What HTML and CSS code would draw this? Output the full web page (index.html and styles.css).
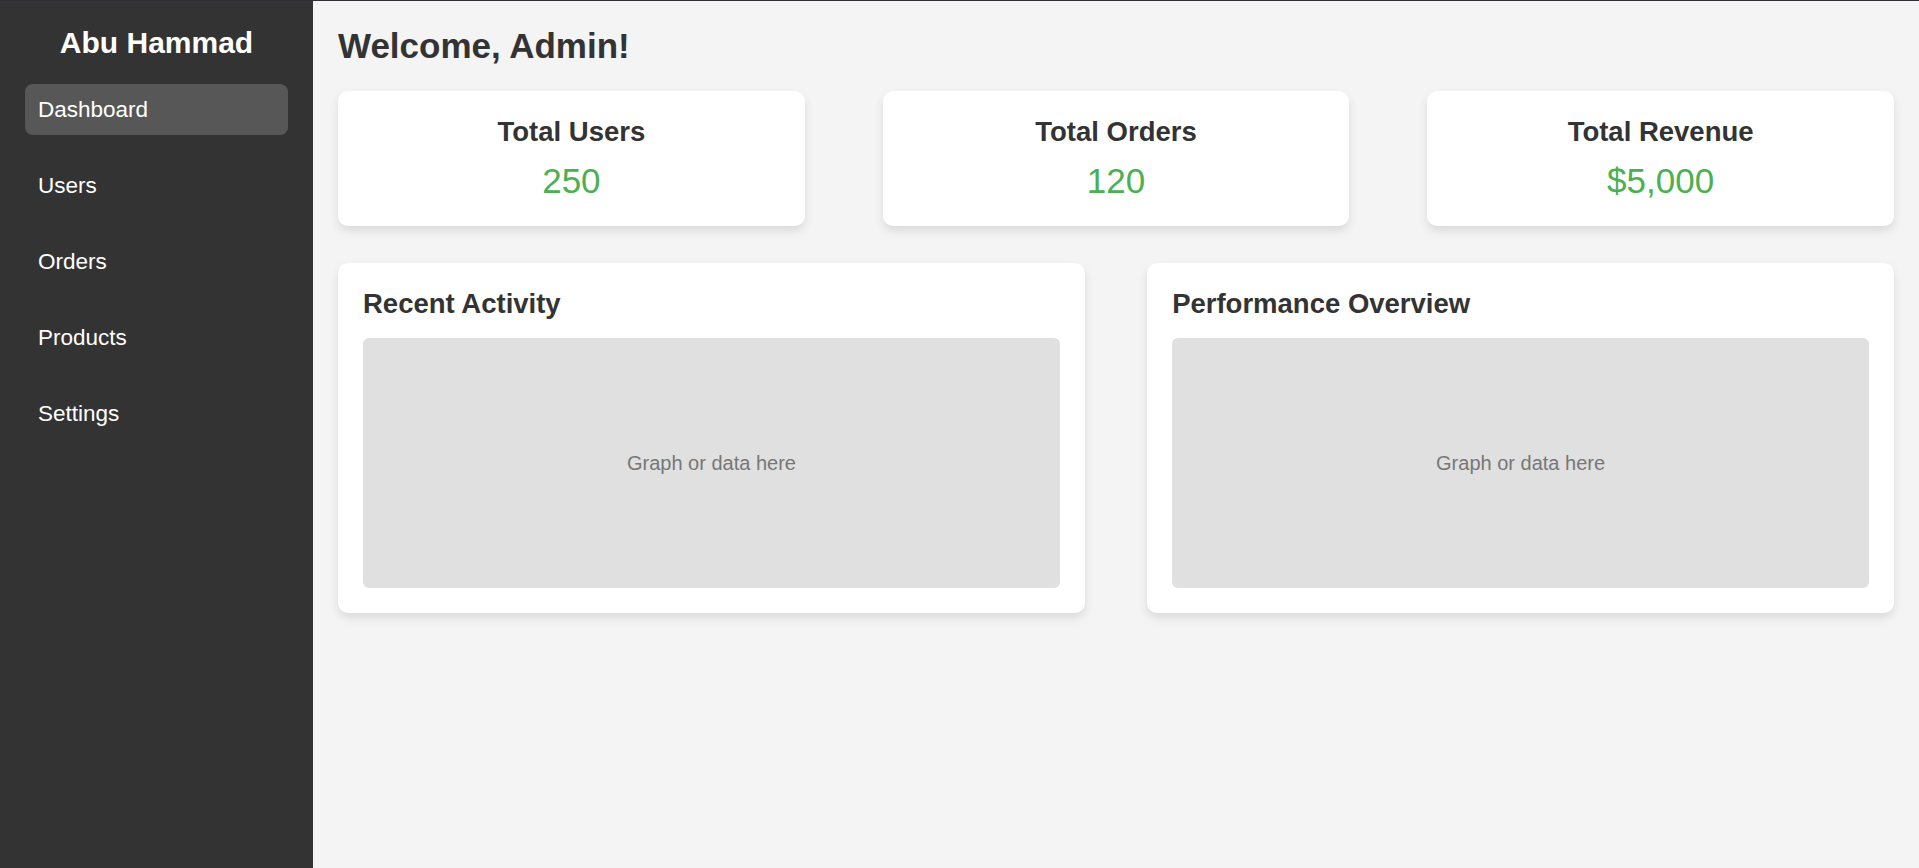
FILE: index.html
```html
<!DOCTYPE html>
<html lang="en">
<head>
<meta charset="utf-8">
<title>Admin Dashboard</title>
<link rel="stylesheet" href="styles.css">
</head>
<body>
<div class="layout">
  <aside class="sidebar">
    <h2 class="brand">Abu Hammad</h2>
    <ul class="nav">
      <li class="nav-item active">Dashboard</li>
      <li class="nav-item">Users</li>
      <li class="nav-item">Orders</li>
      <li class="nav-item">Products</li>
      <li class="nav-item">Settings</li>
    </ul>
  </aside>
  <main class="main">
    <h1 class="welcome">Welcome, Admin!</h1>
    <section class="stats">
      <div class="stat-card">
        <h3 class="stat-title">Total Users</h3>
        <p class="stat-value">250</p>
      </div>
      <div class="stat-card">
        <h3 class="stat-title">Total Orders</h3>
        <p class="stat-value">120</p>
      </div>
      <div class="stat-card">
        <h3 class="stat-title">Total Revenue</h3>
        <p class="stat-value">$5,000</p>
      </div>
    </section>
    <section class="panels">
      <div class="panel">
        <h3 class="panel-title">Recent Activity</h3>
        <div class="placeholder">Graph or data here</div>
      </div>
      <div class="panel">
        <h3 class="panel-title">Performance Overview</h3>
        <div class="placeholder">Graph or data here</div>
      </div>
    </section>
  </main>
</div>
</body>
</html>
```

FILE: styles.css
```css
* {
  box-sizing: border-box;
}

html, body {
  margin: 0;
  padding: 0;
  height: 100%;
}

body {
  font-family: "Liberation Sans", Arial, sans-serif;
  color: #333;
  background: #f4f4f4;
}

.layout {
  display: flex;
  min-height: 100%;
  border-top: 1px solid #2e3036;
}

.sidebar {
  width: 313px;
  flex-shrink: 0;
  background: #333;
  color: #fff;
  padding: 25px 25px;
}

.brand {
  margin: 0 0 24px;
  font-size: 30px;
  font-weight: bold;
  text-align: center;
}

.nav {
  list-style: none;
  margin: 0;
  padding: 0;
  display: flex;
  flex-direction: column;
  gap: 25px;
}

.nav-item {
  font-size: 22.5px;
  padding: 12.5px 13px;
  border-radius: 8px;
  color: #fff;
}

.nav-item.active {
  background: #575757;
}

.main {
  flex: 1;
  padding: 25px;
}

.welcome {
  margin: 0 0 24.5px;
  font-size: 35px;
  font-weight: bold;
  color: #333;
}

.stats {
  display: flex;
  justify-content: space-between;
  margin-bottom: 37.5px;
}

.stat-card {
  width: 30%;
  background: #fff;
  border-radius: 10px;
  padding: 25px;
  text-align: center;
  box-shadow: 0 5px 10px rgba(0, 0, 0, 0.1);
}

.stat-title {
  margin: 0 0 13px;
  font-size: 27.5px;
  font-weight: bold;
  color: #333;
}

.stat-value {
  margin: 0;
  font-size: 35px;
  color: #4caf50;
}

.panels {
  display: flex;
  justify-content: space-between;
}

.panel {
  width: 48%;
  background: #fff;
  border-radius: 10px;
  padding: 25px;
  box-shadow: 0 5px 10px rgba(0, 0, 0, 0.1);
}

.panel-title {
  margin: 0 0 18px;
  font-size: 27.5px;
  font-weight: bold;
  color: #333;
}

.placeholder {
  height: 250px;
  background: #e0e0e0;
  border-radius: 6px;
  display: flex;
  align-items: center;
  justify-content: center;
  font-size: 20px;
  color: #777;
}
```
